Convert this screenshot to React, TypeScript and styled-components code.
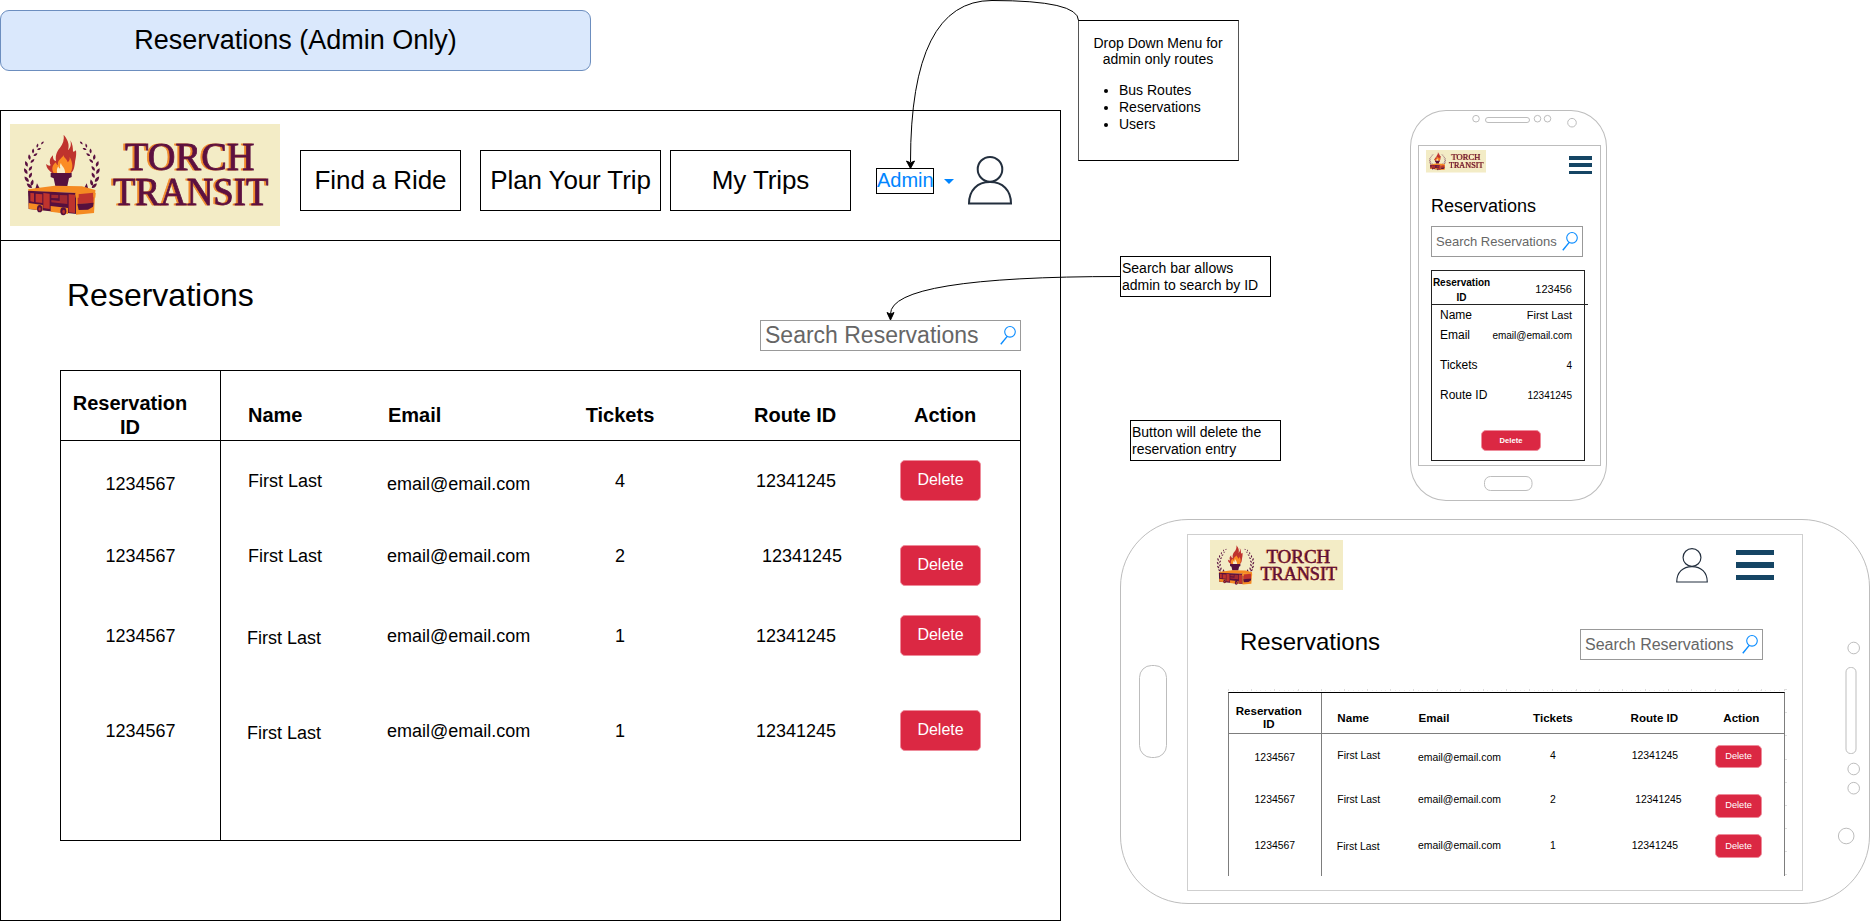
import React from "react";
import styled, { createGlobalStyle, css } from "styled-components";

const GlobalStyle = createGlobalStyle`
  *, *::before, *::after { box-sizing: border-box; }
  html, body { margin: 0; padding: 0; background: #fff; }
  body {
    font-family: "Liberation Sans", Helvetica, Arial, sans-serif;
    color: #000;
    overflow: hidden;
  }
`;

/* ---------- canvas ---------- */

const Canvas = styled.main`
  position: relative;
  width: 1870px;
  height: 921px;
  overflow: hidden;
`;

const Placed = styled.div<{ $x: number; $y: number }>`
  position: absolute;
  left: ${(p) => p.$x}px;
  top: ${(p) => p.$y}px;
`;

const Connectors = styled.svg`
  position: absolute;
  left: 0;
  top: 0;
  pointer-events: none;
`;

const Banner = styled.h1`
  margin: 0;
  width: 591px;
  height: 61px;
  display: flex;
  align-items: center;
  justify-content: center;
  border: 1px solid #6c8ebf;
  border-radius: 9px;
  background: #dae8fc;
  font-size: 27px;
  font-weight: 400;
`;

/* ---------- notes ---------- */

const Note = styled.div<{ $w: number; $h: number }>`
  width: ${(p) => p.$w}px;
  height: ${(p) => p.$h}px;
  border: 1px solid #000;
  background: #fff;
  padding: 3px 1px;
  font-size: 14px;
  line-height: 17px;
  white-space: nowrap;
`;

const MenuNote = styled(Note)`
  border-color: #000 #555;
  padding: 14px 0 0;
`;

const MenuNoteTitle = styled.p`
  margin: 0;
  padding-right: 1px;
  text-align: center;
  line-height: 16px;
`;

const MenuNoteList = styled.ul`
  margin: 15px 0 0;
  padding-left: 40px;
`;

/* ---------- shared parts ---------- */

const ScreenTitle = styled.h2<{ $size: number }>`
  margin: 0;
  font-size: ${(p) => p.$size}px;
  line-height: ${(p) => p.$size + 4}px;
  font-weight: 400;
`;

const SearchBox = styled.div<{ $w: number; $size: number; $h?: number }>`
  width: ${(p) => p.$w}px;
  height: ${(p) => p.$h ?? 31}px;
  display: flex;
  align-items: center;
  justify-content: space-between;
  border: 1px solid #999;
  padding: 0 4px;
  color: #666;
  font-size: ${(p) => p.$size}px;
  white-space: nowrap;
`;

const DangerButton = styled.button<{ $w: string; $h: string; $size: string; $bold?: boolean }>`
  display: flex;
  flex: none;
  align-items: center;
  justify-content: center;
  width: ${(p) => p.$w};
  height: ${(p) => p.$h};
  border: 1px solid #ee8c9b;
  border-radius: 5px;
  background: #db2843;
  color: #fff;
  font-family: inherit;
  font-size: ${(p) => p.$size};
  font-weight: ${(p) => (p.$bold ? 700 : 400)};
  padding: 0 0 1px;
`;

const LogoArt = styled.svg`
  display: block;
  flex: none;
`;

const LogoWord = styled.text`
  font-family: "Liberation Serif", serif;
  font-size: 39.5px;
  fill: #5c1040;
  stroke: #5c1040;
  stroke-width: 0.8px;
  filter: drop-shadow(-1.1px 0.9px 0 #f08a2c);
`;

const leaves: Array<[number, number, number, number]> = [
  [127, 84, 46, 0.5],
  [112, 92, 14, 0.55],
  [117, 102, 68, 0.55],
  [99, 108, 4, 0.65],
  [106, 119, 58, 0.6],
  [88, 127, -6, 0.75],
  [97, 138, 46, 0.7],
  [79, 147, -18, 0.8],
  [91, 160, 36, 0.75],
  [77, 169, -28, 0.85],
  [91, 181, 28, 0.8],
  [80, 193, -36, 0.9],
  [96, 203, 16, 0.85],
  [88, 213, -48, 0.9],
];

const Laurel = () => (
  <g fill="#5a1140">
    {leaves.map(([x, y, r, s], i) => (
      <path
        key={i}
        d="M0 -12 C7 -4 7 4 1 11 C-7 5 -6 -4 0 -12Z"
        transform={`translate(${x} ${y}) rotate(${r}) scale(${s})`}
      />
    ))}
    <path d="M106 222 L111 205 L120 222Z" />
  </g>
);

const Logo = ({ w, h }: { w: number; h: number }) => (
  <LogoArt width={w} height={h} viewBox="0 0 270 102" preserveAspectRatio="none">
    <rect width="270" height="102" fill="#f3ecc6" />
    <g transform="scale(.33333) translate(-30 -27)">
      <Laurel />
      <g transform="translate(371 0) scale(-1 1)">
        <Laurel />
      </g>
      <path
        fill="#bf332d"
        d="M191 59 C207 78 208 92 204 106 C213 98 214 88 211 76 C218 86 219 100 219 110 C223 110 226 108 228 105 C230 124 226 132 225 142 C223 158 222 166 212 176 L158 176 C148 166 138 160 139 146 C144 152 148 153 152 151 C146 138 151 128 159 121 C158 132 162 138 168 138 C165 118 173 106 180 98 C189 86 193 74 191 59Z"
      />
      <path
        fill="#fb8c24"
        d="M191 120 C190 128 201 130 203 142 C208 138 210 132 209 126 C218 142 221 160 210 176 L162 176 C153 162 157 150 168 142 C169 148 171 150 174 150 C171 136 184 132 191 120Z"
      />
      <path
        fill="#f8edc8"
        d="M183 144 C184 154 197 158 195 176 L172 176 C169 166 171 160 175 154 C176 159 178 161 181 160 C179 154 180 148 183 144Z"
      />
      <path fill="#56103e" d="M152 174 H215 V186 L207 190 L202 213 H166 L161 190 L152 186Z" />
      <path fill="#f58a22" d="M84 223 L164 212 L246 214 L286 225 L284 234 L228 234 L86 229Z" />
      <path fill="#56103e" d="M84 227 L230 234 V297 L86 282Z" />
      <path fill="#bf332d" d="M91 234 L102 235 V261 L91 259Z M107 236 L127 238 V264 L107 262Z M130 234 L149 236 V282 L130 279Z M206 238 L225 239 V294 L206 292Z" />
      <path fill="#a32a31" d="M154 239 L175 240 V250 L154 249Z M179 240 L202 241 V267 L154 262 V255 L179 258Z" />
      <path fill="#f58a22" d="M86 264 L128 270 V287 L86 281Z M152 273 L204 279 V297 L152 290Z" />
      <path fill="#f58a22" d="M228 234 L286 226 L282 294 L228 299Z" />
      <path fill="#bf332d" d="M233 238 L281 233 L280 264 L233 267Z" />
      <path fill="#56103e" d="M232 267 L281 263 L279 275 L264 284 L236 285Z" />
      <path fill="#f58a22" d="M225 235 H236 V248 H227Z M279 232 L287 234 L286 248 L280 247Z" />
      <ellipse cx="119" cy="281" rx="8" ry="11" fill="#56103e" />
      <ellipse cx="190" cy="289" rx="9" ry="12" fill="#56103e" />
      <ellipse cx="119" cy="282" rx="3.5" ry="5.5" fill="#bf332d" />
      <ellipse cx="191" cy="290" rx="4" ry="6" fill="#bf332d" />
    </g>
    <LogoWord x="115" y="46.3" textLength="129.5" lengthAdjust="spacingAndGlyphs">TORCH</LogoWord>
    <LogoWord x="103" y="81" textLength="155.5" lengthAdjust="spacingAndGlyphs">TRANSIT</LogoWord>
  </LogoArt>
);

const Icon = styled.svg`
  display: block;
  flex: none;
  overflow: visible;
`;

const SearchIcon = () => (
  <Icon width="16" height="19" viewBox="0 0 16 19" fill="none" stroke="#0a8cff" strokeWidth="1.1">
    <circle cx="10" cy="5.8" r="5.3" />
    <path d="M7.2 10.4 L0.8 18.2" strokeWidth="1.4" />
  </Icon>
);

const UserIcon = ({ w, h, stroke }: { w: number; h: number; stroke: number }) => (
  <Icon width={w} height={h} viewBox="0 0 44 49" preserveAspectRatio="none" fill="none" stroke="#232f3e" strokeWidth={stroke}>
    <ellipse cx="22" cy="13.3" rx="12.3" ry="12.4" />
    <path d="M1 47.6 C1 34 9.5 26 22 26 C34.5 26 43 34 43 47.6 Z" />
  </Icon>
);

const Hamburger = styled.div<{ $w: number; $bar: number; $gap: number }>`
  display: flex;
  flex-direction: column;
  gap: ${(p) => p.$gap}px;
  width: ${(p) => p.$w}px;

  &::before, &::after, & > i {
    content: "";
    display: block;
    height: ${(p) => p.$bar}px;
    background: #154564;
  }
`;

/* ---------- reservation table ---------- */

/* Every measure in the table is a multiple of --u, so one layout serves both sizes. */
const Table = styled.section<{ $unit: number; $h: number; $soft?: boolean }>`
  --u: ${(p) => p.$unit}px;
  --line: ${(p) => (p.$soft ? "#7d7d7d" : "#000")};
  width: calc(961 * var(--u));
  height: ${(p) => p.$h}px;
  display: flex;
  flex-direction: column;
  overflow: hidden;
  border: 1px solid var(--line);
  border-top-color: #000;
  ${(p) => p.$soft && css`border-bottom: 0;`}
`;

const Row = styled.div<{ $h?: number; $head?: boolean }>`
  display: grid;
  grid-template-columns:
    calc(160 * var(--u)) calc(140 * var(--u)) calc(199 * var(--u))
    calc(120 * var(--u)) calc(215 * var(--u)) 1fr;
  flex: ${(p) => (p.$h ? "none" : "1")};
  ${(p) => p.$h && css`height: calc(${p.$h} * var(--u));`}
  ${(p) =>
    p.$head
      ? css`
          border-bottom: 1px solid var(--line);
          font-size: calc(20 * var(--u));
          line-height: calc(24 * var(--u));
          font-weight: 700;
        `
      : css`
          font-size: calc(18 * var(--u));
          line-height: calc(22 * var(--u));
        `}
  white-space: nowrap;
`;

const Cell = styled.div<{ $top: number; $left?: number; $right?: number; $center?: boolean; $rule?: boolean }>`
  padding: calc(${(p) => p.$top} * var(--u)) calc(${(p) => p.$right ?? 0} * var(--u)) 0
    calc(${(p) => p.$left ?? 0} * var(--u));
  text-align: ${(p) => (p.$center ? "center" : "left")};
  ${(p) => p.$rule && css`border-right: 1px solid var(--line);`}
`;

type Reservation = {
  tickets: number;
  height?: number;
  idDrop?: number;
  nameDrop?: number;
  emailDrop?: number;
  routeShift?: number;
  buttonTop: number;
};

const reservations: Reservation[] = [
  { tickets: 4, height: 75, idDrop: 3, emailDrop: 3, buttonTop: 19 },
  { tickets: 2, height: 80, routeShift: 6, buttonTop: 29 },
  { tickets: 1, height: 95, nameDrop: 2, buttonTop: 19 },
  { tickets: 1, nameDrop: 2, buttonTop: 19 },
];

const TEXT_TOP = 29;

const ReservationTable = ({ unit, height, soft, rows }: { unit: number; height: number; soft?: boolean; rows: Reservation[] }) => (
  <Table $unit={unit} $h={height} $soft={soft}>
    <Row $head $h={70}>
      <Cell $top={20} $right={21} $center $rule>
        Reservation
        <br />
        ID
      </Cell>
      <Cell $top={32} $left={27}>Name</Cell>
      <Cell $top={32} $left={27}>Email</Cell>
      <Cell $top={32} $center>Tickets</Cell>
      <Cell $top={32} $left={74}>Route ID</Cell>
      <Cell $top={32} $left={19}>Action</Cell>
    </Row>
    {rows.map((r, i) => (
      <Row key={i} $h={r.height}>
        <Cell $top={TEXT_TOP + (r.idDrop ?? 0)} $center $rule>1234567</Cell>
        <Cell $top={TEXT_TOP + (r.nameDrop ?? 0)} $left={r.nameDrop ? 26 : 27}>First Last</Cell>
        <Cell $top={TEXT_TOP + (r.emailDrop ?? 0)} $left={26}>email@email.com</Cell>
        <Cell $top={TEXT_TOP} $center>{r.tickets}</Cell>
        <Cell $top={TEXT_TOP} $left={76 + (r.routeShift ?? 0)}>12341245</Cell>
        <Cell $top={r.buttonTop} $left={5}>
          <DangerButton $w="calc(81 * var(--u))" $h="calc(41 * var(--u))" $size="calc(16 * var(--u))">
            Delete
          </DangerButton>
        </Cell>
      </Row>
    ))}
  </Table>
);

/* ---------- desktop ---------- */

const Desktop = styled.section`
  width: 1061px;
  height: 811px;
  border: 1px solid #000;
`;

const DesktopHeader = styled.header`
  display: flex;
  align-items: flex-start;
  height: 130px;
  padding: 13px 0 0 9px;
  border-bottom: 1px solid #000;
`;

const Nav = styled.nav`
  display: flex;
  align-items: flex-start;
  margin: 26px 25px 0 20px;
`;

const NavItem = styled.a<{ $w: number; $gap?: number }>`
  display: flex;
  align-items: center;
  justify-content: center;
  width: ${(p) => p.$w}px;
  height: 61px;
  margin-left: ${(p) => p.$gap ?? 0}px;
  border: 1px solid #000;
  font-size: 26px;
  letter-spacing: -0.1px;
  white-space: nowrap;
  padding-bottom: 1px;
`;

const AdminMenu = styled.div`
  display: flex;
  align-items: center;
  gap: 10px;
  margin-top: 44px;
  color: #0085ff;
  font-size: 20px;
  line-height: 22px;
`;

const AdminLabel = styled.span`
  width: 58px;
  height: 26px;
  border: 1px solid #000;
  text-align: center;
`;

const Caret = styled.i`
  border: 5px solid transparent;
  border-top-color: #0085ff;
  border-bottom-width: 0;
`;

const HeaderUser = styled.div`
  margin: 32px 0 0 14px;
`;

const DesktopBody = styled.div`
  padding: 36px 39px 0 59px;
`;

const DesktopTitle = styled.div`
  padding-left: 7px;
`;

const DesktopSearch = styled.div`
  display: flex;
  justify-content: flex-end;
  margin: 7px 0 19px;
`;

/* ---------- phones ---------- */

const Portrait = styled.section`
  position: relative;
  width: 197px;
  height: 391px;
  padding: 35px 6px 0 7px;
  border: 1px solid #bdbdbd;
  border-radius: 36px / 37px;
`;

const Landscape = styled.section`
  position: relative;
  width: 750px;
  height: 385px;
  padding: 14px 0 0 66px;
  border: 1px solid #bdbdbd;
  border-radius: 68px;
`;

const Hardware = styled.svg`
  position: absolute;
  left: -1px;
  top: -1px;
  fill: #fff;
  stroke: #bdbdbd;
`;

const PortraitScreen = styled.div`
  width: 183px;
  height: 321px;
  margin-top: -1px;
  border: 1px solid #bdbdbd;
  padding: 4px 0 0 7px;
`;

const LandscapeScreen = styled.div`
  width: 616px;
  height: 357px;
  border: 1px solid #cfcfcf;
  padding: 5px 0 0 22px;
`;

const PhoneBar = styled.header`
  display: flex;
  align-items: flex-start;
`;

const PortraitMenu = styled.div`
  margin: 6px 0 0 83px;
`;

const LandscapeTools = styled.div`
  display: flex;
  align-items: flex-start;
  gap: 28px;
  margin: 8px 0 0 333px;
`;

const LandscapeMenu = styled.div`
  padding-top: 2px;
`;

const PortraitContent = styled.div`
  padding: 21px 0 0 5px;
  display: flex;
  flex-direction: column;
  gap: 9px;
`;

const Card = styled.article`
  width: 154px;
  height: 191px;
  margin-top: 4px;
  border: 1px solid #222;
`;

const CardHead = styled.div`
  display: flex;
  justify-content: space-between;
  width: 156px;
  height: 34px;
  padding-right: 16px;
  border-bottom: 1px solid #222;
  font-size: 11px;
  line-height: 37px;
`;

const CardHeadLabel = styled.strong`
  width: 59px;
  padding-top: 4px;
  text-align: center;
  font-size: 10px;
  line-height: 15px;
`;

const CardLine = styled.div<{ $h: number; $size?: number }>`
  display: flex;
  justify-content: space-between;
  align-items: center;
  height: ${(p) => p.$h}px;
  padding: 0 12px 0 8px;
  font-size: 12px;

  & > span:last-child {
    font-size: ${(p) => p.$size ?? 10}px;
  }
`;

const CardAction = styled.div`
  display: flex;
  padding: 25px 0 0 49px;
`;

const LandscapeHeading = styled.div`
  display: flex;
  justify-content: space-between;
  align-items: flex-start;
  width: 523px;
  margin: 38px 0 0 30px;
`;

const LandscapeSearch = styled.div`
  padding-top: 1px;
`;

const RulerFrame = styled.div`
  width: 560px;
  margin: 29px 0 0 18px;
  padding: 3px 3px 0 0;
  background:
    repeating-linear-gradient(90deg, #ddd 0 1px, transparent 1px 23.17px) 0 0 / 557px 2px no-repeat,
    repeating-linear-gradient(90deg, #eee 0 1px, transparent 1px 4.63px) 0 1px / 557px 1px no-repeat,
    repeating-linear-gradient(180deg, #ddd 0 1px, transparent 1px 23.17px) 557px 0 / 2px 187px no-repeat;
`;

export default function App() {
  return (
    <>
      <GlobalStyle />
      <Canvas>
        <Placed $x={0} $y={10}>
          <Banner>Reservations (Admin Only)</Banner>
        </Placed>

        <Placed $x={0} $y={110}>
          <Desktop>
            <DesktopHeader>
              <Logo w={270} h={102} />
              <Nav>
                <NavItem $w={161}>Find a Ride</NavItem>
                <NavItem $w={181} $gap={19}>Plan Your Trip</NavItem>
                <NavItem $w={181} $gap={9}>My Trips</NavItem>
              </Nav>
              <AdminMenu>
                <AdminLabel>Admin</AdminLabel>
                <Caret />
              </AdminMenu>
              <HeaderUser>
                <UserIcon w={44} h={49} stroke={2} />
              </HeaderUser>
            </DesktopHeader>
            <DesktopBody>
              <DesktopTitle>
                <ScreenTitle $size={32}>Reservations</ScreenTitle>
              </DesktopTitle>
              <DesktopSearch>
                <SearchBox $w={261} $size={23}>
                  Search Reservations
                  <SearchIcon />
                </SearchBox>
              </DesktopSearch>
              <ReservationTable unit={1} height={471} rows={reservations} />
            </DesktopBody>
          </Desktop>
        </Placed>

        <Placed $x={1078} $y={20}>
          <MenuNote $w={161} $h={141}>
            <MenuNoteTitle>
              Drop Down Menu for
              <br />
              admin only routes
            </MenuNoteTitle>
            <MenuNoteList>
              <li>Bus Routes</li>
              <li>Reservations</li>
              <li>Users</li>
            </MenuNoteList>
          </MenuNote>
        </Placed>
        <Placed $x={1120} $y={256}>
          <Note $w={151} $h={41}>
            Search bar allows
            <br />
            admin to search by ID
          </Note>
        </Placed>
        <Placed $x={1130} $y={420}>
          <Note $w={151} $h={41}>
            Button will delete the
            <br />
            reservation entry
          </Note>
        </Placed>

        <Placed $x={1410} $y={110}>
          <Portrait>
            <Hardware width="197" height="391">
              <circle cx="66" cy="8.7" r="3.3" />
              <rect x="75.5" y="7.5" width="44" height="5" rx="2.5" />
              <circle cx="127.5" cy="8.7" r="3.3" />
              <circle cx="137.5" cy="8.7" r="3.3" />
              <circle cx="162" cy="12.7" r="4.3" />
              <rect x="74.5" y="366.5" width="47.5" height="14" rx="6" />
            </Hardware>
            <PortraitScreen>
              <PhoneBar>
                <Logo w={60} h={22.5} />
                <PortraitMenu>
                  <Hamburger $w={23} $bar={3.5} $gap={3.8}><i /></Hamburger>
                </PortraitMenu>
              </PhoneBar>
              <PortraitContent>
                <ScreenTitle $size={18}>Reservations</ScreenTitle>
                <SearchBox $w={152} $size={13}>
                  Search Reservations
                  <SearchIcon />
                </SearchBox>
                <Card>
                  <CardHead>
                    <CardHeadLabel>
                      Reservation
                      <br />
                      ID
                    </CardHeadLabel>
                    <span>123456</span>
                  </CardHead>
                  <CardLine $h={20} $size={11}><span>Name</span><span>First Last</span></CardLine>
                  <CardLine $h={20}><span>Email</span><span>email@email.com</span></CardLine>
                  <CardLine $h={40}><span>Tickets</span><span>4</span></CardLine>
                  <CardLine $h={20}><span>Route ID</span><span>12341245</span></CardLine>
                  <CardAction>
                    <DangerButton $w="60px" $h="21px" $size="7.6px" $bold>Delete</DangerButton>
                  </CardAction>
                </Card>
              </PortraitContent>
            </PortraitScreen>
          </Portrait>
        </Placed>

        <Placed $x={1120} $y={519}>
          <Landscape>
            <Hardware width="750" height="385">
              <rect x="19.5" y="146.5" width="27" height="92" rx="12" />
              <circle cx="733.7" cy="129" r="5.8" />
              <rect x="726" y="148.5" width="10" height="86" rx="4.5" />
              <circle cx="733.7" cy="250" r="5.8" />
              <circle cx="733.7" cy="269.2" r="5.8" />
              <circle cx="726.2" cy="317" r="7.8" />
            </Hardware>
            <LandscapeScreen>
              <PhoneBar>
                <Logo w={133} h={50} />
                <LandscapeTools>
                  <UserIcon w={32} h={35} stroke={1.6} />
                  <LandscapeMenu>
                    <Hamburger $w={38} $bar={5.3} $gap={7}><i /></Hamburger>
                  </LandscapeMenu>
                </LandscapeTools>
              </PhoneBar>
              <LandscapeHeading>
                <ScreenTitle $size={24}>Reservations</ScreenTitle>
                <LandscapeSearch>
                  <SearchBox $w={183} $size={16}>
                    Search Reservations
                    <SearchIcon />
                  </SearchBox>
                </LandscapeSearch>
              </LandscapeHeading>
              <RulerFrame>
                <ReservationTable unit={0.5795} height={184} soft rows={reservations.slice(0, 3)} />
              </RulerFrame>
            </LandscapeScreen>
          </Landscape>
        </Placed>

        <Connectors width="1870" height="921" fill="none" stroke="#000">
          <path d="M1078.5 20.5 Q1078.5 .5 992 .5 Q910.5 .5 910.5 162" />
          <path d="M1120.5 276.5 Q890.5 276.5 890.5 314" />
          <path d="M910.5 168.5 L906.5 161 L910.5 162.8 L914.5 161Z" fill="#000" />
          <path d="M890.5 320 L887 312.5 L890.5 314.2 L894 312.5Z" fill="#000" />
        </Connectors>
      </Canvas>
    </>
  );
}
